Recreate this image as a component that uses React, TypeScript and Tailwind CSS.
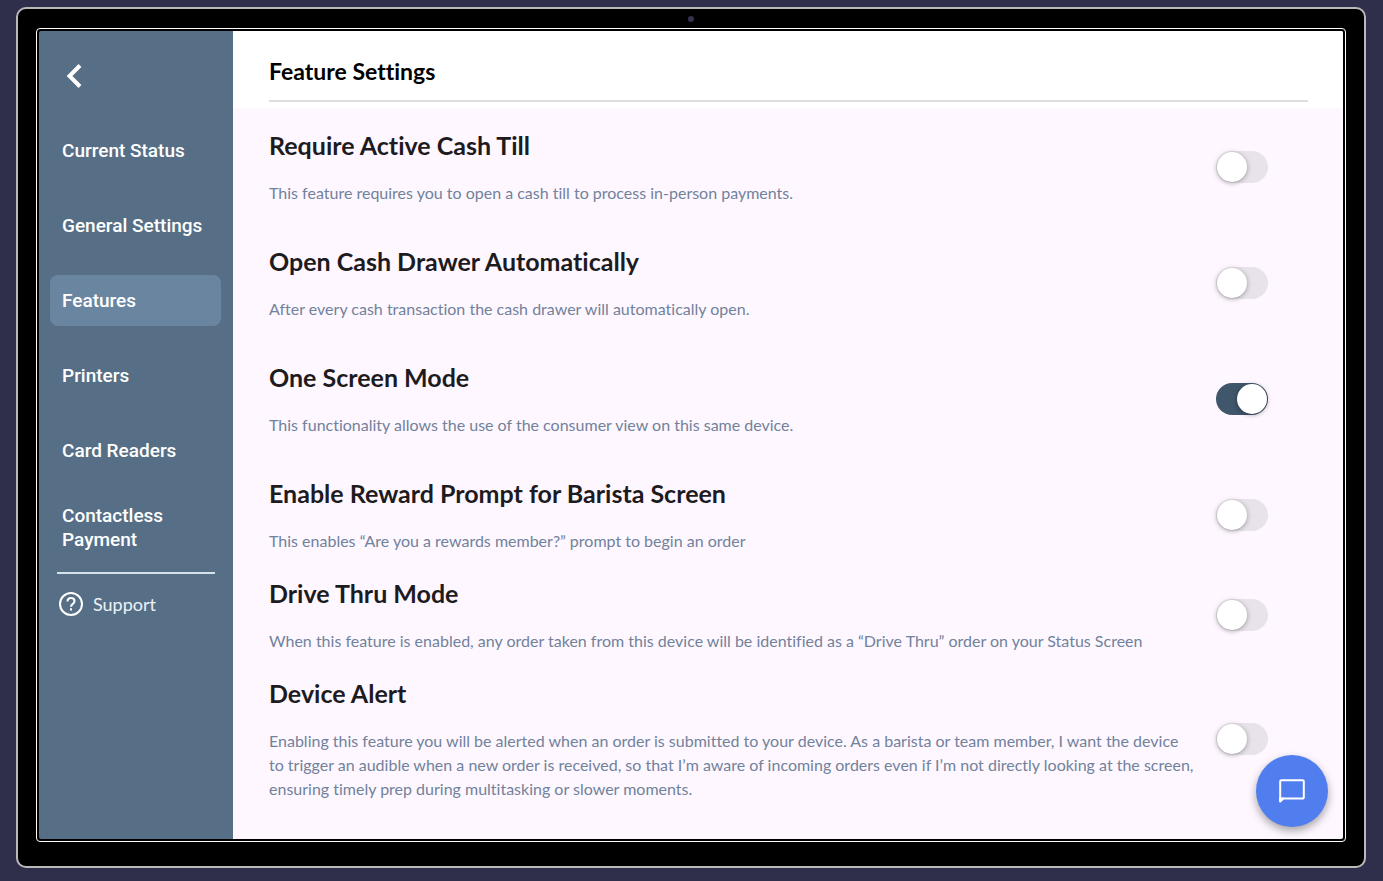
import { useState } from "react";

const navItems = [
  { label: "Current Status", href: "#status" },
  { label: "General Settings", href: "#general" },
  { label: "Features", href: "#features" },
  { label: "Printers", href: "#printers" },
  { label: "Card Readers", href: "#card-readers" },
  { label: "Contactless Payment", href: "#contactless" },
];

const features = [
  {
    id: "cash-till",
    title: "Require Active Cash Till",
    text: "This feature requires you to open a cash till to process in-person payments.",
    on: false,
    compact: false,
  },
  {
    id: "cash-drawer",
    title: "Open Cash Drawer Automatically",
    text: "After every cash transaction the cash drawer will automatically open.",
    on: false,
    compact: false,
  },
  {
    id: "one-screen",
    title: "One Screen Mode",
    text: "This functionality allows the use of the consumer view on this same device.",
    on: true,
    compact: false,
  },
  {
    id: "reward-prompt",
    title: "Enable Reward Prompt for Barista Screen",
    text: "This enables “Are you a rewards member?” prompt to begin an order",
    on: false,
    compact: true,
  },
  {
    id: "drive-thru",
    title: "Drive Thru Mode",
    text: "When this feature is enabled, any order taken from this device will be identified as a “Drive Thru” order on your Status Screen",
    on: false,
    compact: true,
  },
  {
    id: "device-alert",
    title: "Device Alert",
    text: "Enabling this feature you will be alerted when an order is submitted to your device. As a barista or team member, I want the device to trigger an audible when a new order is received, so that I’m aware of incoming orders even if I’m not directly looking at the screen, ensuring timely prep during multitasking or slower moments.",
    on: false,
    compact: true,
  },
];

type Feature = (typeof features)[number];

function FeatureRow({ feature }: { feature: Feature }) {
  const [on, setOn] = useState(feature.on);

  return (
    <li className={`flex items-center gap-5 ${feature.compact ? "pb-6" : "pb-10"}`}>
      <div className="flex-1">
        <label htmlFor={feature.id} className="block text-[25px] leading-8 font-bold text-[#1d1b20]">
          {feature.title}
        </label>
        <p id={`${feature.id}-text`} className="mt-5 text-base leading-6 text-[#71829b]">
          {feature.text}
        </p>
      </div>
      <input
        id={feature.id}
        type="checkbox"
        role="switch"
        checked={on}
        onChange={() => setOn((v) => !v)}
        aria-describedby={`${feature.id}-text`}
        className="flex h-8 w-[52px] shrink-0 cursor-pointer appearance-none items-center rounded-full bg-[#e8e3ea] px-px before:size-[30px] before:rounded-full before:bg-white before:shadow-[0_1px_5px_rgba(0,0,0,0.35)] checked:justify-end checked:bg-[#40566b]"
      />
    </li>
  );
}

function Sidebar() {
  return (
    <aside className="w-[194px] shrink-0 bg-[#566f86] text-white">
      <button aria-label="Back" className="mt-[33px] ml-[27px] block">
        <svg viewBox="0 0 16 24" className="h-6 w-4" fill="none" stroke="currentColor" strokeWidth="4">
          <path d="M14 1.5 3.5 12 14 22.5" />
        </svg>
      </button>
      <nav className="mt-[37px] flex flex-col gap-6 pr-3 pl-[11px] font-[Roboto,sans-serif]">
        {navItems.map((item) => (
          <a
            key={item.href}
            href={item.href}
            className={`flex min-h-[51px] items-center rounded-lg px-3 py-1 text-[19px] leading-6 font-medium ${
              item.label === "Features" ? "bg-[#6a859f]" : ""
            }`}
          >
            {item.label}
          </a>
        ))}
      </nav>
      <hr className="mx-[18px] mt-4 border-t-2 border-[#d5e2ec]" />
      <a href="#support" className="mt-4 ml-5 flex items-center gap-[10px] text-lg text-[#eef2f6]">
        <svg viewBox="0 0 24 24" className="size-6" fill="none" stroke="white" strokeWidth="2">
          <circle cx="12" cy="12" r="11" />
          <path d="M8.500 9.500c0-2 1.500-3.500 3.500-3.500s3.500 1.300 3.500 3.200c0 2.600-3.500 2.800-3.500 5.600" />
          <path d="M12 16.300v2.200" />
        </svg>
        Support
      </a>
    </aside>
  );
}

export default function App() {
  return (
    <div className="flex min-h-screen flex-col bg-[#2f2e4b] pt-[7px] pr-[17px] pb-[13px] pl-4 font-[Lato,sans-serif] [font-variant-ligatures:none]">
      <div className="flex flex-1 flex-col rounded-[10px] border-2 border-[#b9b9b9] bg-black px-[18px] pb-6">
        <div className="flex h-[19px] items-center justify-center">
          <span className="size-[6px] rounded-full bg-[#34324f]" />
        </div>
        <div className="flex flex-1 flex-col rounded-[4px] border border-white p-[2px]">
          <div className="relative flex flex-1 overflow-hidden rounded-[2px]">
            <Sidebar />
            <main className="flex-1 bg-[#fef7ff]">
              <header className="h-[77px] bg-white pt-[23px] pr-[35px] pl-9">
                <h1 className="border-b-2 border-[#dedede] pb-3 text-[23px] leading-[34px] font-bold text-black">
                  Feature Settings
                </h1>
              </header>
              <ul className="pt-[21px] pr-[75px] pl-9">
                {features.map((feature) => (
                  <FeatureRow key={feature.id} feature={feature} />
                ))}
              </ul>
            </main>
            <button
              aria-label="Open chat"
              className="absolute right-[15px] bottom-3 flex size-[72px] items-center justify-center rounded-full bg-[#507eee] text-white shadow-[0_4px_9px_rgba(0,0,0,0.35)]"
            >
              <svg viewBox="0 0 26 24" className="h-6 w-[26px]" fill="none" stroke="currentColor" strokeWidth="2" strokeLinejoin="round">
                <path d="M1.200 22V2.400a1.200 1.200 0 0 1 1.200-1.200h21.200a1.200 1.200 0 0 1 1.200 1.200v16a1.200 1.200 0 0 1-1.200 1.200H4z" />
                <path d="M1.200 19.600H4L1.200 22.500z" fill="currentColor" />
              </svg>
            </button>
          </div>
        </div>
      </div>
    </div>
  );
}
